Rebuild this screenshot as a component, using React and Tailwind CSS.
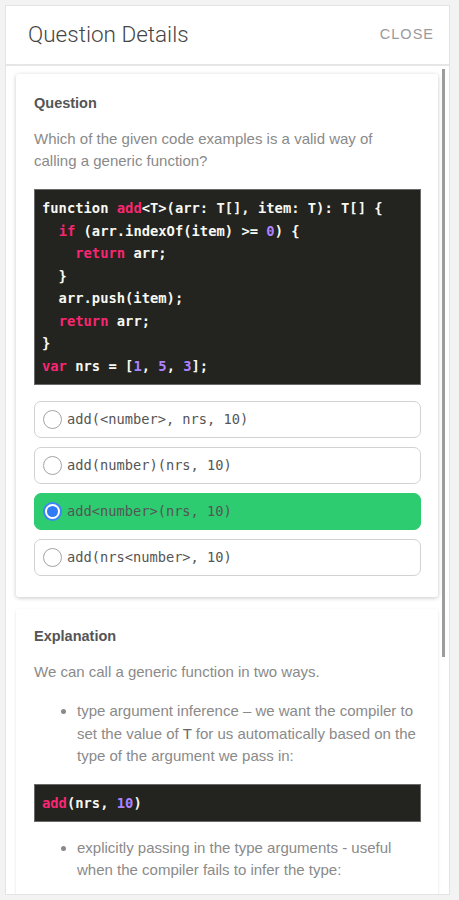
import React from "react";

const P = ({ children }) => <span className="text-[#f92672]">{children}</span>;
const N = ({ children }) => <span className="text-[#ae81ff]">{children}</span>;

const mono = { fontFamily: '"DejaVu Sans Mono", "Liberation Mono", monospace' };

function Radio({ checked }) {
  if (checked) {
    return (
      <span className="w-[19px] h-[19px] rounded-full border-2 border-[#3d86f5] bg-white flex items-center justify-center shrink-0">
        <span className="w-[11px] h-[11px] rounded-full bg-[#2f7bf5]" />
      </span>
    );
  }
  return <span className="w-[19px] h-[19px] rounded-full border-[1.5px] border-[#a3a3a3] bg-white shrink-0" />;
}

function Option({ text, checked }) {
  return (
    <div
      className={
        "h-[37px] rounded-[7px] border flex items-center gap-[5px] pl-[8px] " +
        (checked ? "bg-[#2ecc71] border-[#2ecc71]" : "bg-white border-[#d2d2d2]")
      }
    >
      <Radio checked={checked} />
      <span className="text-[13.7px] text-[#555] whitespace-pre" style={mono}>
        {text}
      </span>
    </div>
  );
}

export default function App() {
  return (
    <div
      className="w-[459px] h-[900px] bg-[#f3f3f3] pt-[5px] pl-[5px] pr-[9px] overflow-hidden"
      style={{ fontFamily: '"Liberation Sans", Arial, sans-serif' }}
    >
      <div className="w-[445px] h-[890px] bg-white border border-[#e4e4e4] flex flex-col overflow-hidden">
        <div className="h-[60px] shrink-0 flex items-center justify-between pl-[22px] pr-[15px] border-b-2 border-[#e6e6e6]">
          <span
            className="text-[22.5px] font-light text-[#454545]"
            style={{ fontFamily: 'Roboto, "Liberation Sans", sans-serif' }}
          >
            Question Details
          </span>
          <span className="text-[14.5px] tracking-[1px] text-[#9a9a9a]">CLOSE</span>
        </div>
        <div className="flex-1 flex overflow-hidden">
          <div className="w-[436px] pl-[10px] pr-[4px] pt-[8px] flex flex-col gap-[12px] overflow-hidden">
            <div className="bg-white rounded-[3px] shadow-[0_1px_4px_rgba(0,0,0,0.22)] pt-[19px] pl-[18px] pr-[17px] pb-[21px] shrink-0">
              <div className="text-[14.5px] font-bold text-[#555] leading-[20px]">Question</div>
              <p className="mt-[15px] max-w-[352px] text-[15px] leading-[22px] text-[#8a8a8a]">
                Which of the given code examples is a valid way of calling a generic function?
              </p>
              <pre
                className="mt-[17px] bg-[#23241f] border border-[#6a6a6a] pl-[7px] py-[7px] text-[13.8px] leading-[22.5px] font-bold text-[#f8f8f2] whitespace-pre"
                style={mono}
              >
                {"function "}<P>add</P>{"<T>(arr: T[], item: T): T[] {\n"}
                {"  "}<P>if</P>{" (arr.indexOf(item) >= "}<N>0</N>{") {\n"}
                {"    "}<P>return</P>{" arr;\n"}
                {"  }\n"}
                {"  arr.push(item);\n"}
                {"  "}<P>return</P>{" arr;\n"}
                {"}\n"}
                <P>var</P>{" nrs = ["}<N>1</N>{", "}<N>5</N>{", "}<N>3</N>{"];"}
              </pre>
              <div className="mt-[16px] flex flex-col gap-[9px]">
                <Option text="add(<number>, nrs, 10)" />
                <Option text="add(number)(nrs, 10)" />
                <Option text="add<number>(nrs, 10)" checked />
                <Option text="add(nrs<number>, 10)" />
              </div>
            </div>
            <div className="bg-white rounded-[3px] shadow-[0_1px_3px_rgba(0,0,0,0.12)] pt-[17px] pl-[18px] pr-[17px] pb-[20px] shrink-0">
              <div className="text-[14.5px] font-bold text-[#555] leading-[20px]">Explanation</div>
              <p className="mt-[15px] text-[15px] leading-[22px] text-[#8a8a8a]">
                We can call a generic function in two ways.
              </p>
              <ul className="mt-[17px] list-disc pl-[43px] text-[15px] leading-[22.5px] text-[#8a8a8a]">
                <li>
                  type argument inference – we want the compiler to set the value of{" "}
                  <span className="text-[#666]">T</span> for us automatically based on the type of the argument we pass in:
                </li>
              </ul>
              <pre
                className="mt-[16px] bg-[#23241f] border border-[#6a6a6a] pl-[7px] py-[7px] text-[13.8px] leading-[22px] font-bold text-[#f8f8f2] whitespace-pre"
                style={mono}
              >
                <P>add</P>{"(nrs, "}<N>10</N>{")"}
              </pre>
              <ul className="mt-[15px] list-disc pl-[43px] text-[15px] leading-[22.5px] text-[#8a8a8a]">
                <li>explicitly passing in the type arguments - useful when the compiler fails to infer the type:</li>
              </ul>
            </div>
          </div>
          <div className="w-[7px] pt-[3px]">
            <div className="w-[3px] h-[588px] bg-[#9c9c9c]" />
          </div>
        </div>
      </div>
    </div>
  );
}
